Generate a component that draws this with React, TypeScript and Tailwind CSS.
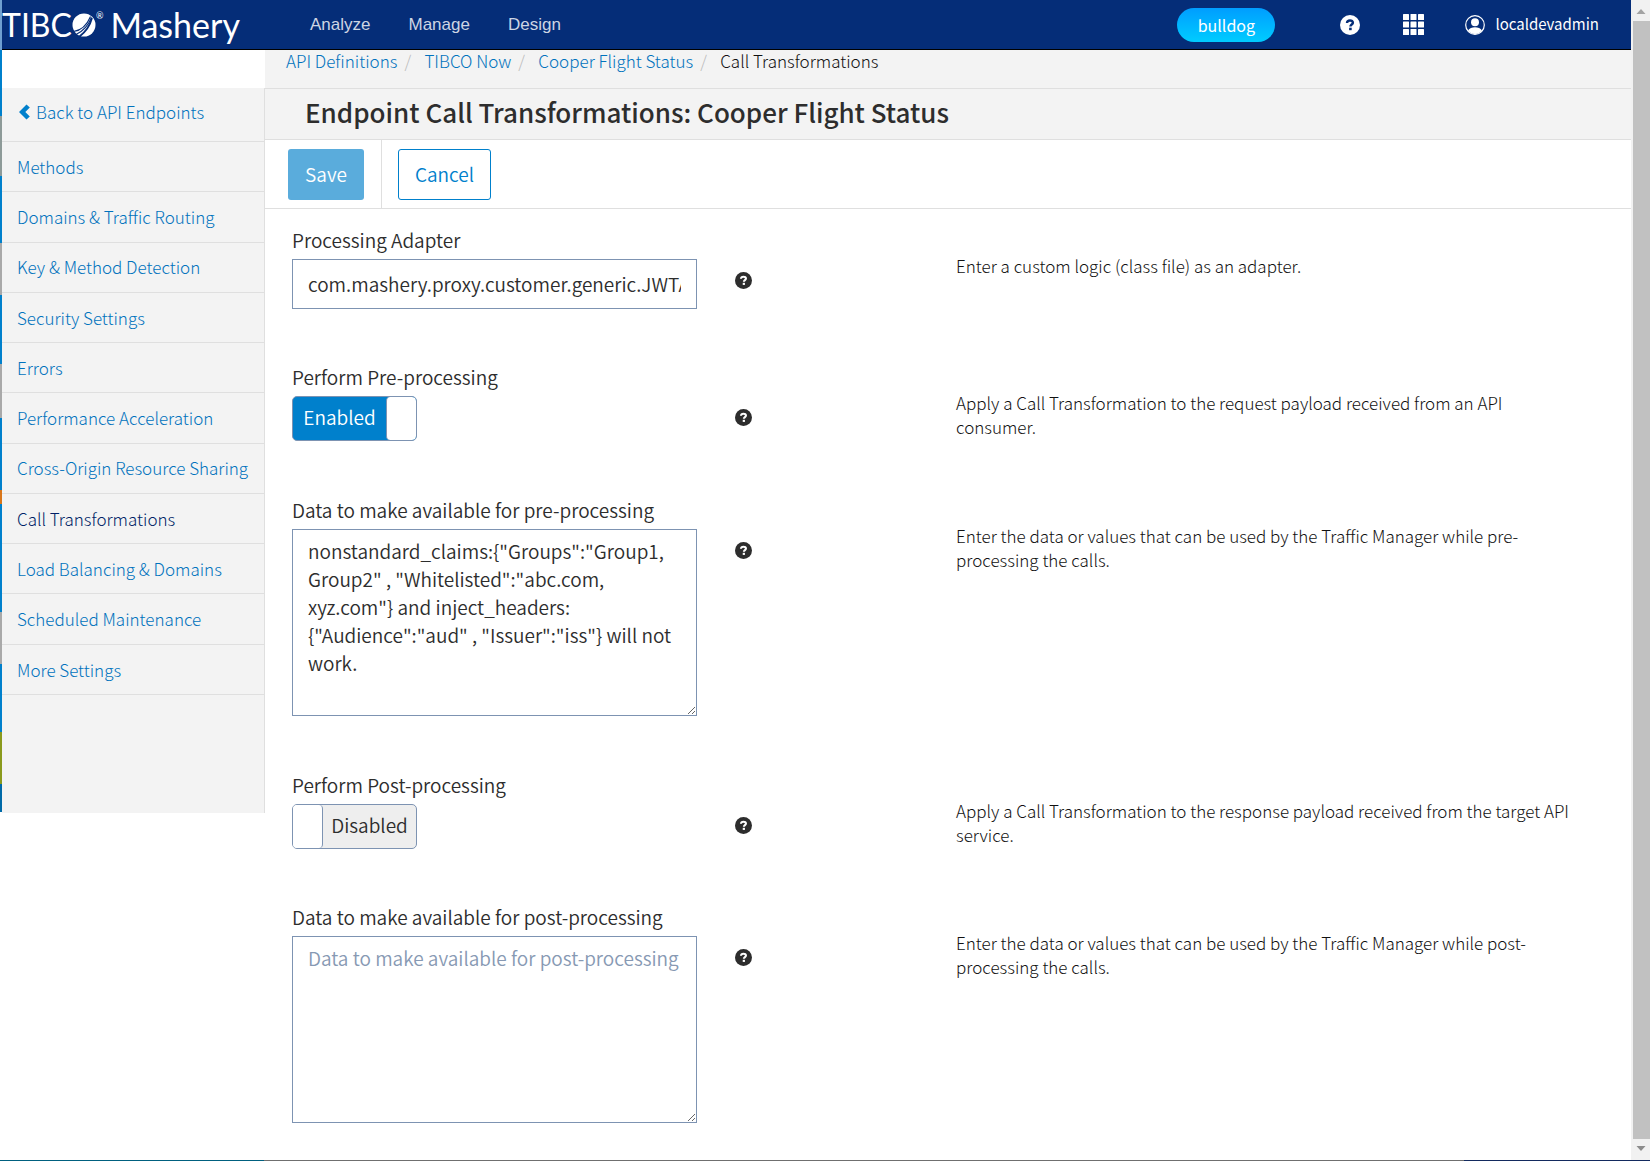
import React, { useState } from "react";

const font = "font-['Noto_Sans_CJK_SC','Noto_Sans',sans-serif]";

const sideLinks = [
  "Methods",
  "Domains & Traffic Routing",
  "Key & Method Detection",
  "Security Settings",
  "Errors",
  "Performance Acceleration",
  "Cross-Origin Resource Sharing",
  "Call Transformations",
  "Load Balancing & Domains",
  "Scheduled Maintenance",
  "More Settings",
];

const crumbs = ["API Definitions", "TIBCO Now", "Cooper Flight Status"];

function HelpIcon({ className }: { className: string }) {
  return (
    <svg viewBox="0 0 20 20" className={className} aria-hidden="true">
      <circle cx="10" cy="10" r="10" fill="currentColor" />
      <path
        d="M7 8C7.100 6.300 8.300 5.500 10 5.500c1.700 0 2.900.8 2.900 2.200 0 1.800-2.500 1.900-2.500 3.900"
        fill="none"
        className="stroke-(--mark)"
        strokeWidth="2.400"
      />
      <rect x="9.100" y="12.700" width="2.600" height="2.500" className="fill-(--mark)" />
    </svg>
  );
}

function Logo() {
  return (
    <a
      href="#home"
      aria-label="TIBCO Mashery"
      className="flex h-full w-[278px] shrink-0 items-center font-['Lato',sans-serif] text-[32px] font-normal leading-[50px] text-white"
    >
      <span>TIBC</span>
      <svg viewBox="0 0 24 24" className="size-6 shrink-0" aria-hidden="true">
        <circle cx="12" cy="12" r="11.500" fill="#fff" />
        <path
          d="M1.500 18.500C9 17.500 15 12 18.500 3.500M4 21.500C11.500 18 16.500 12 19.500 4.500"
          fill="none"
          stroke="#052d78"
          strokeWidth="1.100"
        />
        <path d="M7.500 23.500C14 18.500 18 12.500 20 5" fill="none" stroke="#052d78" strokeWidth="1.800" />
      </svg>
      <span className="self-start pt-2 text-[9px] leading-[16px]">®</span>
      <span className="pl-[7px] text-[34px]">Mashery</span>
    </a>
  );
}

function Header() {
  return (
    <header className="flex h-[50px] shrink-0 items-center border-b border-black bg-[#052d78] pr-8 font-normal text-white">
      <Logo />
      <nav className="flex gap-[38px] pl-[30px] pt-px font-['Liberation_Sans',Arial,sans-serif] text-[17px] text-[#cdd5e4]">
        <a href="#analyze">Analyze</a>
        <a href="#manage">Manage</a>
        <a href="#design">Design</a>
      </nav>
      <div className="ml-auto flex items-center">
        <button className="h-[34px] w-[98px] rounded-full bg-linear-to-b from-[#009dff] to-[#00ccff] text-base leading-8">
          bulldog
        </button>
        <button aria-label="Help" className="ml-[65px] [--mark:#052d78]">
          <HelpIcon className="size-5" />
        </button>
        <button aria-label="Apps" className="ml-[43px]">
          <svg viewBox="0 0 21 21" className="size-[21px]" fill="#fff" aria-hidden="true">
            {[0, 7.5, 15].map((y) =>
              [0, 7.5, 15].map((x) => <rect key={`${x}-${y}`} x={x} y={y} width="6" height="6" rx="0.5" />)
            )}
          </svg>
        </button>
        <button className="ml-[41px] flex items-center gap-[10px] text-[15px]">
          <svg viewBox="0 0 20 20" className="size-5" aria-hidden="true">
            <circle cx="10" cy="10" r="9.3" fill="none" stroke="#fff" strokeWidth="1.2" />
            <circle cx="10" cy="7.2" r="4" fill="#fff" />
            <path d="M3 15.500C4.500 13 7 12.300 10 12.300s5.500.7 7 3.200A9 9 0 0 1 10 19a9 9 0 0 1-7-3.500Z" fill="#fff" />
          </svg>
          localdevadmin
        </button>
      </div>
    </header>
  );
}

function Sidebar() {
  return (
    <aside className="w-[263px] shrink-0 pt-[38px]">
      <nav className="h-[725px] border-r border-[#dfdfdf] bg-[#f3f3f3] text-[17px] font-light text-[#0072bd]">
        <a href="#endpoints" className="flex h-[54px] items-center gap-[6px] border-b border-[#dfdfdf] pb-[5px] pl-[17px]">
          <svg viewBox="0 0 11 16" className="h-4 w-[11px]" aria-hidden="true">
            <path d="M0 8 7.500.5 10.800 3.500 6.300 8l4.500 4.500L7.500 15.500Z" fill="#0080cc" />
          </svg>
          Back to API Endpoints
        </a>
        <div className="flex h-[553px] flex-col">
          {sideLinks.map((label) => (
            <a
              key={label}
              href="#section"
              aria-current={label === "Call Transformations" ? "page" : undefined}
              className="flex flex-1 items-center whitespace-nowrap border-b border-[#dfdfdf] pl-[15px] aria-[current=page]:text-[#001f66]"
            >
              {label}
            </a>
          ))}
        </div>
      </nav>
    </aside>
  );
}

type RowProps = {
  id: string;
  label: string;
  hint: string;
  height: string;
  children: React.ReactNode;
};

function Row({ id, label, hint, height, children }: RowProps) {
  return (
    <div className={`grid grid-cols-[405px_259px_1fr] ${height}`}>
      <div>
        <label htmlFor={id} className="block h-[31px] text-[19px] leading-6">
          {label}
        </label>
        {children}
      </div>
      <div className="pl-[38px] pt-11">
        <button type="button" aria-label={`Help: ${label}`} className="block text-[#2d2d2d] [--mark:#fff]">
          <HelpIcon className="size-[17px]" />
        </button>
      </div>
      <p className="max-w-[624px] pt-[26px] text-[17px] font-light leading-6 text-[#111111]">{hint}</p>
    </div>
  );
}

function Toggle({ id, initial }: { id: string; initial: boolean }) {
  const [on, setOn] = useState(initial);
  return (
    <button
      id={id}
      type="button"
      role="switch"
      aria-checked={on}
      onClick={() => setOn(!on)}
      className="group flex h-[45px] w-[125px] overflow-hidden rounded-[5px] border border-[#7d93b2] bg-[#eeeeee] text-[19px] leading-10 aria-checked:flex-row-reverse aria-checked:bg-[#0080cc] aria-checked:text-white"
    >
      <span className="h-full w-[30px] rounded-r-[4px] border-r border-[#7d93b2] bg-white group-aria-checked:rounded-l-[4px] group-aria-checked:border-r-0 group-aria-checked:border-l" />
      <span className="flex-1 text-center">{on ? "Enabled" : "Disabled"}</span>
    </button>
  );
}

const area =
  "block h-[187px] w-full resize border border-[#7d93b2] bg-white px-[15px] py-[7px] text-[19px] leading-7 placeholder:text-[#8799b3]";

function Scrollbar() {
  return (
    <div className="flex w-[19px] shrink-0 flex-col items-center bg-[#f1f1f1]" aria-hidden="true">
      <svg viewBox="0 0 18 21" className="h-[21px] w-[18px]">
        <path d="M4.500 14 9 9l4.500 5Z" fill="#a3a3a3" />
      </svg>
      <div className="w-[17px] flex-1 self-end bg-[#c1c1c1]" />
      <svg viewBox="0 0 18 21" className="h-[21px] w-[18px]">
        <path d="M4.500 7 9 12l4.500-5Z" fill="#8c8c8c" />
      </svg>
    </div>
  );
}

function LeftEdge() {
  return (
    <div className="flex w-[2px] shrink-0 flex-col" aria-hidden="true">
      <div className="h-[50px] bg-[#6f9fd0]" />
      <div className="h-[66px] bg-[#0080cc]" />
      <div className="h-[60px] bg-[#8d9a98]" />
      <div className="h-[67px] bg-[#0080cc]" />
      <div className="h-[52px] bg-[#a9a9a9]" />
      <div className="h-[69px] bg-[#0080cc]" />
      <div className="h-[54px] bg-[#a9a9a9]" />
      <div className="h-[72px] bg-[#0080cc]" />
      <div className="h-[14px] bg-[#d9761a]" />
      <div className="h-[108px] bg-[#0080cc]" />
      <div className="h-[52px] bg-[#a9a9a9]" />
      <div className="h-[68px] bg-[#0080cc]" />
      <div className="h-[52px] bg-[#8a9a1c]" />
      <div className="h-[28px] bg-[#006aa8]" />
    </div>
  );
}

export default function App() {
  return (
    <div className={`flex h-screen flex-col overflow-hidden bg-white font-[350] text-[#2d2d2d] ${font}`}>
      <div className="flex min-h-0 flex-1">
        <LeftEdge />
        <div className="flex min-w-0 flex-1 flex-col">
          <Header />
          <div className="flex flex-1">
            <Sidebar />
            <main className="min-w-0 flex-1">
              <nav
                aria-label="Breadcrumb"
                className="flex h-[39px] border-b border-[#dfdfdf] bg-[#f3f3f3] pl-[21px] text-[17px] font-light leading-[22px] text-[#0072bd]"
              >
                {crumbs.map((c) => (
                  <React.Fragment key={c}>
                    <a href="#crumb">{c}</a>
                    <span className="w-[27px] pl-[7px] text-[#bbbbbb]">/</span>
                  </React.Fragment>
                ))}
                <span className="text-[#111111]">Call Transformations</span>
              </nav>
              <h1 className="h-[51px] border-b border-[#dfdfdf] bg-[#f3f3f3] pl-10 text-[26px] font-medium leading-[46px]">
                Endpoint Call Transformations: Cooper Flight Status
              </h1>
              <div className="flex h-[69px] border-b border-[#dfdfdf] text-[19px]">
                <div className="w-[117px] border-r border-[#dfdfdf] pl-[23px] pt-[9px]">
                  <button className="h-[51px] w-[76px] rounded-[3px] bg-[#5aacdc] text-white">Save</button>
                </div>
                <div className="pl-4 pt-[9px]">
                  <button className="h-[51px] w-[93px] rounded-[3px] border border-[#0080cc] bg-white text-[#0080cc]">
                    Cancel
                  </button>
                </div>
              </div>
              <form className="pl-[27px] pr-[34px] pt-[19px]">
                <Row
                  id="adapter"
                  label="Processing Adapter"
                  hint="Enter a custom logic (class file) as an adapter."
                  height="h-[137px]"
                >
                  <input
                    id="adapter"
                    type="text"
                    defaultValue="com.mashery.proxy.customer.generic.JWTAdapter"
                    className="block h-[50px] w-full border border-[#7d93b2] px-[15px] pb-[2px] text-[19px]"
                  />
                </Row>
                <Row
                  id="pre"
                  label="Perform Pre-processing"
                  hint="Apply a Call Transformation to the request payload received from an API consumer."
                  height="h-[133px]"
                >
                  <Toggle id="pre" initial={true} />
                </Row>
                <Row
                  id="predata"
                  label="Data to make available for pre-processing"
                  hint="Enter the data or values that can be used by the Traffic Manager while pre-processing the calls."
                  height="h-[275px]"
                >
                  <textarea
                    id="predata"
                    className={area}
                    defaultValue={
                      'nonstandard_claims:{"Groups":"Group1, Group2" , "Whitelisted":"abc.com, xyz.com"} and inject_headers:{"Audience":"aud" , "Issuer":"iss"} will not work.'
                    }
                  />
                </Row>
                <Row
                  id="post"
                  label="Perform Post-processing"
                  hint="Apply a Call Transformation to the response payload received from the target API service."
                  height="h-[132px]"
                >
                  <Toggle id="post" initial={false} />
                </Row>
                <Row
                  id="postdata"
                  label="Data to make available for post-processing"
                  hint="Enter the data or values that can be used by the Traffic Manager while post-processing the calls."
                  height="h-[220px]"
                >
                  <textarea id="postdata" className={area} placeholder="Data to make available for post-processing" />
                </Row>
              </form>
            </main>
          </div>
        </div>
        <Scrollbar />
      </div>
      <div className="flex h-px shrink-0" aria-hidden="true">
        <div className="w-[264px] bg-[#00607f]" />
        <div className="flex-1 bg-[#6f6f6f]" />
        <div className="w-[186px] bg-[#132a5e]" />
      </div>
    </div>
  );
}
